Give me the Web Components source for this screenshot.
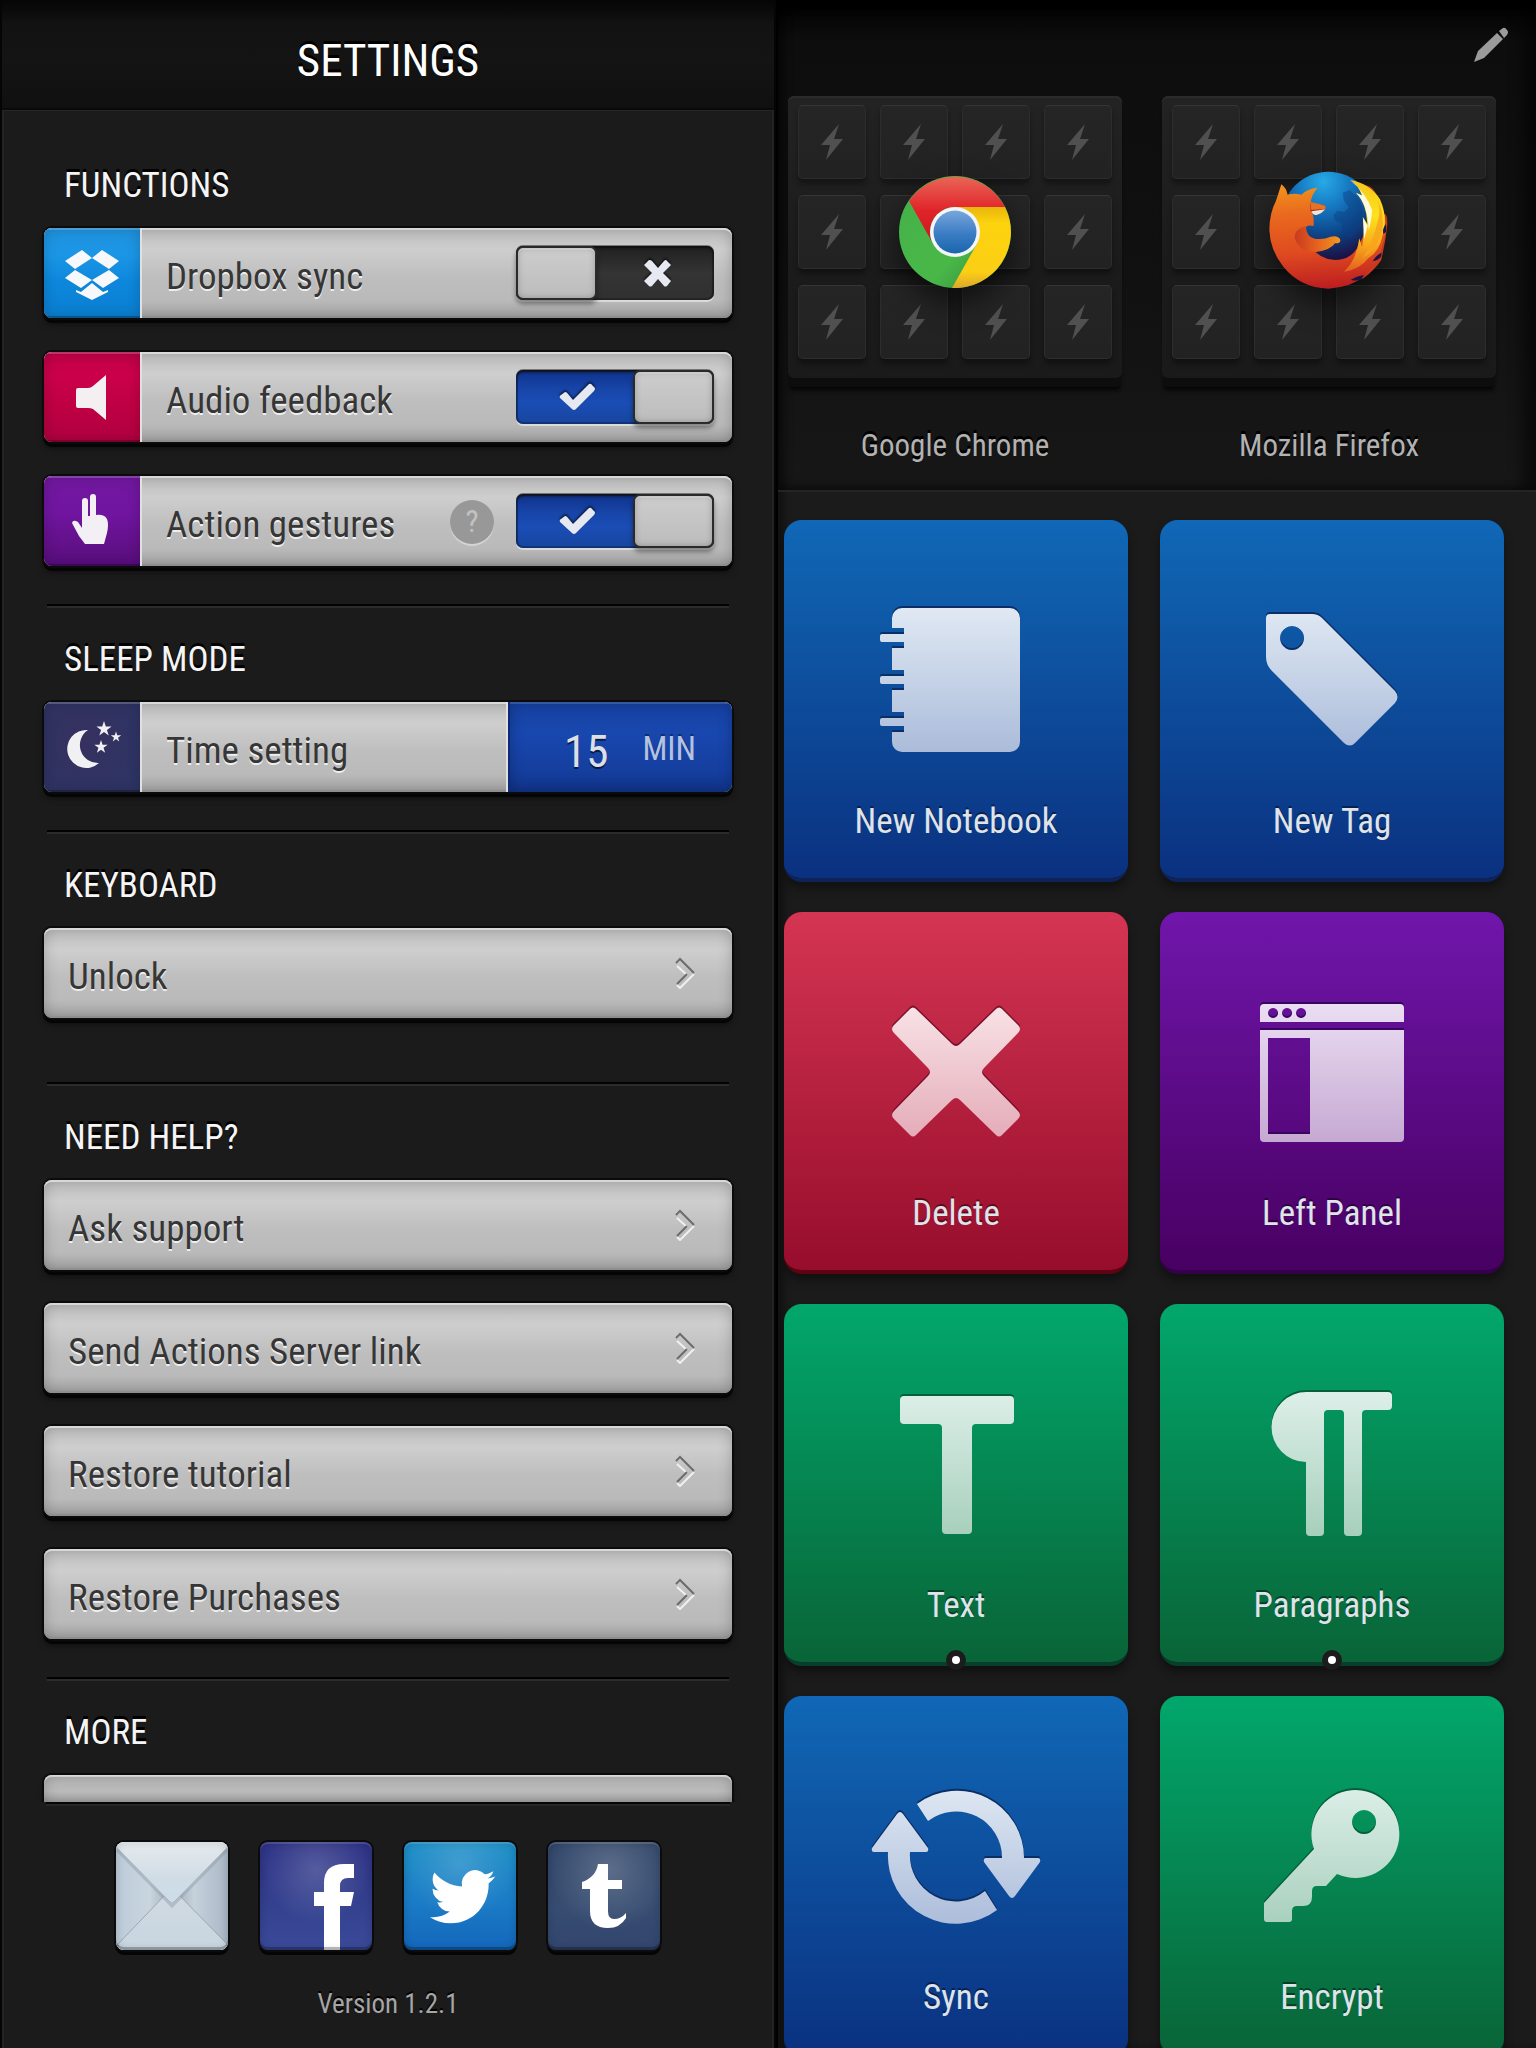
<!DOCTYPE html>
<html lang="en">
<head>
<meta charset="utf-8">
<title>Settings</title>
<style>
  html, body { margin: 0; height: 100%; background: #1b1b1b; }
  body { font-family: "Roboto Condensed", "Roboto", sans-serif; overflow: hidden; }
</style>
</head>
<body>
<app-shell>
  <settings-panel slot="side" heading="SETTINGS" version="Version 1.2.1">
    <settings-section heading="FUNCTIONS">
      <toggle-row label="Dropbox sync" tint="dropbox">
        <svg slot="icon" width="96" height="90" fill="#f6f8fb" aria-hidden="true"><path d="M38 22L21 33l10 8 17-11zM58 22l17 11-10 8-17-11zM31 42l17 10-11 8-16-10zM65 42L48 52l11 8 16-10zM32 62l5 2 11-9 11 9 5-2v2L48 72 32 64z"/></svg>
      </toggle-row>
      <toggle-row label="Audio feedback" tint="audio" on>
        <svg slot="icon" width="96" height="90" fill="#f4f0f2" aria-hidden="true"><path d="M34 36H44Q47 36 49 34L62 23V68L49 57Q47 56 44 56H34q-2 0-2-2V38q0-2 2-2z"/></svg>
      </toggle-row>
      <toggle-row label="Action gestures" tint="gesture" on help>
        <svg slot="icon" width="96" height="90" fill="#f3f0f5" aria-hidden="true"><path d="M38 25a3 3 0 0 1 6 0V40h2V21a3 3 0 0 1 6 0V39Q60 38 63 43Q65 48 63 57L60 68H41L35 60L28 47Q29 43 34 46L38 52z"/></svg>
      </toggle-row>
    </settings-section>
    <settings-section heading="SLEEP MODE">
      <value-row label="Time setting" value="15" unit="MIN">
        <svg slot="icon" width="96" height="90" fill="#f1f1f3" aria-hidden="true">
          <path d="M44 28A19 19 0 1 0 55 61A18 18 0 0 1 44 28z"/>
          <path transform="translate(60 27) scale(8)" d="M0-1 .225-.309.951-.309.363.118.588.809 0 .382-.588.809-.363.118-.951-.309-.225-.309z"/>
          <path transform="translate(72 35) scale(5.5)" d="M0-1 .225-.309.951-.309.363.118.588.809 0 .382-.588.809-.363.118-.951-.309-.225-.309z"/>
          <path transform="translate(57 45) scale(7)" d="M0-1 .225-.309.951-.309.363.118.588.809 0 .382-.588.809-.363.118-.951-.309-.225-.309z"/>
        </svg>
      </value-row>
    </settings-section>
    <settings-section heading="KEYBOARD" roomy>
      <link-row>Unlock</link-row>
    </settings-section>
    <settings-section heading="NEED HELP?" tight>
      <link-row>Ask support</link-row>
      <link-row>Send Actions Server link</link-row>
      <link-row>Restore tutorial</link-row>
      <link-row>Restore Purchases</link-row>
    </settings-section>
    <settings-section heading="MORE" last>
      <link-row plain></link-row>
    </settings-section>

    <social-link slot="social" label="Mail" kind="mail">
      <svg viewBox="0 0 112 108" aria-hidden="true">
        <defs>
          <linearGradient id="mf" x1="0" y1="0" x2="0" y2="1"><stop offset="0" stop-color="#e6ebee"/><stop offset=".6" stop-color="#d0dce5"/><stop offset="1" stop-color="#cbdde9"/></linearGradient>
          <linearGradient id="mb" x1="0" y1="0" x2="0" y2="1"><stop offset="0" stop-color="#d0dae2"/><stop offset="1" stop-color="#c8d5df"/></linearGradient>
          <linearGradient id="ms" x1="0" x2="1"><stop offset="0" stop-color="#bccbd9"/><stop offset=".3" stop-color="#c9d6df"/><stop offset=".5" stop-color="#a3adb5"/><stop offset=".7" stop-color="#c5d2dc"/><stop offset="1" stop-color="#a9b6c5"/></linearGradient>
        </defs>
        <path fill="url(#ms)" d="M0 0H112V108H0z"/>
        <path fill="url(#mb)" stroke="#9ba7b3" stroke-width="1" d="M2 102L50 52H62L111 102V110H2z"/>
        <path fill="none" stroke="#8f9aa6" stroke-width="3" stroke-opacity=".45" d="M1 8L56 64L111 8"/>
        <path fill="url(#mf)" stroke="#a7b1ba" stroke-width="1" d="M-1 -1H113L111 6L58 60Q56 62 54 60L1 6z"/>
      </svg>
    </social-link>
    <social-link slot="social" label="Facebook" kind="facebook">
      <svg viewBox="0 0 112 108" fill="#fff" aria-hidden="true"><path d="M64 108V64H54V50H64V41Q64 22 84 22H94V36H88Q80 36 80 44V50H94L91 64H80V108z"/></svg>
    </social-link>
    <social-link slot="social" label="Twitter" kind="twitter">
      <svg viewBox="0 0 112 108" fill="#fff" aria-hidden="true"><path transform="translate(26 22) scale(2.72)" d="M23.953 4.57a10 10 0 01-2.825.775 4.958 4.958 0 002.163-2.723c-.951.555-2.005.959-3.127 1.184a4.92 4.92 0 00-8.384 4.482C7.69 8.095 4.067 6.13 1.64 3.162a4.822 4.822 0 00-.666 2.475c0 1.71.87 3.213 2.188 4.096a4.904 4.904 0 01-2.228-.616v.06a4.923 4.923 0 003.946 4.827 4.996 4.996 0 01-2.212.085 4.936 4.936 0 004.604 3.417 9.867 9.867 0 01-6.102 2.105c-.39 0-.779-.023-1.17-.067a13.995 13.995 0 007.557 2.209c9.053 0 13.998-7.496 13.998-13.985 0-.21 0-.42-.015-.63A9.935 9.935 0 0024 4.59z"/></svg>
    </social-link>
    <social-link slot="social" label="Tumblr" kind="tumblr">
      <svg viewBox="0 0 112 108" fill="#fff" aria-hidden="true"><path d="M50 22H60V38H74V47H60V69Q60 77 66 77Q73 77 78 71V76Q72 86 60 86Q42 86 42 69V47H34V40Q48 35 50 22z"/></svg>
    </social-link>
  </settings-panel>

  <app-switcher slot="apps">
    <app-card name="Google Chrome">
      <svg width="112" height="112" viewBox="-56 -56 112 112" aria-hidden="true">
        <defs>
          <linearGradient id="cr" x1="0" y1="0" x2="0" y2="1"><stop offset="0" stop-color="#ea6556"/><stop offset=".5" stop-color="#e0242a"/><stop offset="1" stop-color="#c41a1e"/></linearGradient>
          <linearGradient id="cy" x1="0" y1="0" x2="0" y2="1"><stop offset="0" stop-color="#e9b50c"/><stop offset=".2" stop-color="#fcd30e"/><stop offset=".8" stop-color="#fbcf14"/><stop offset="1" stop-color="#dda62c"/></linearGradient>
          <linearGradient id="cg" x1="0" y1="0" x2="1" y2="1"><stop offset="0" stop-color="#43b04a"/><stop offset=".6" stop-color="#4ab848"/><stop offset="1" stop-color="#2e8238"/></linearGradient>
          <linearGradient id="cb" x1="0" y1="0" x2="0" y2="1"><stop offset="0" stop-color="#79a6dc"/><stop offset=".55" stop-color="#3a7cc4"/><stop offset="1" stop-color="#1b66ab"/></linearGradient>
        </defs>
        <circle r="56" fill="url(#cg)"/>
        <path fill="url(#cy)" d="M0-25H50A56 56 0 0 1-3 56L21.6 12.5z"/>
        <path fill="url(#cr)" d="M-46-31A56 56 0 0 1 50-25H0A25 25 0 0 0-21.6 12.5z"/>
        <circle r="25" fill="#f3f5f7"/><circle r="21.5" fill="url(#cb)"/>
      </svg>
    </app-card>
    <app-card name="Mozilla Firefox">
      <svg width="126" height="126" viewBox="138 57 378 378" aria-hidden="true">
        <defs>
          <radialGradient id="fg" gradientUnits="userSpaceOnUse" cx="310" cy="95" r="245"><stop offset="0" stop-color="#27aae6"/><stop offset=".35" stop-color="#1474bd"/><stop offset=".65" stop-color="#0d4487"/><stop offset=".95" stop-color="#1b1246"/></radialGradient>
          <linearGradient id="fo" gradientUnits="userSpaceOnUse" x1="250" y1="110" x2="270" y2="415"><stop offset="0" stop-color="#f0901e"/><stop offset=".25" stop-color="#ea6a1e"/><stop offset=".65" stop-color="#df4a20"/><stop offset="1" stop-color="#bd1f20"/></linearGradient>
          <linearGradient id="fy" gradientUnits="userSpaceOnUse" x1="430" y1="100" x2="410" y2="375"><stop offset="0" stop-color="#f6c91c"/><stop offset=".35" stop-color="#fde21c"/><stop offset=".65" stop-color="#f8ad1d"/><stop offset="1" stop-color="#e2571f"/></linearGradient>
          <linearGradient id="fa" x1="0" y1="0" x2="1" y2="0"><stop offset="0" stop-color="#c93a20"/><stop offset=".5" stop-color="#e5631f"/><stop offset="1" stop-color="#f39a1f"/></linearGradient>
        </defs>
        <circle cx="325" cy="205" r="140" fill="url(#fg)"/>
        <path fill="#0b3f80" opacity=".45" d="M368 128l22-8 14 14 12 8 10 30 2 40-14 30-20 22-22-10-8-34-18-8-6-16 12-14 22 4 12-14-14-20z"/>
        <path fill="#c8391d" d="M435 105Q466 110 474 148L482 185L498 194Q504 205 501 232L496 270Q490 300 484 330Q462 362 430 385L350 412L380 340L455 250L470 170z"/>
        <path fill="url(#fo)" d="M168 152L184 103Q199 114 203 134Q222 128 244 134Q262 116 293 113Q274 134 272 158L281 206V228Q252 222 258 244Q262 270 272 290Q300 328 345 330Q395 330 416 285L440 240L470 200L492 195Q506 235 488 282Q478 336 436 376Q395 412 325 416Q240 412 190 350Q150 300 148 240Q148 190 168 152z"/>
        <path fill="#a92420" d="M270 156L300 163Q318 165 318 176Q312 184 298 188Q288 196 272 184z"/>
        <path fill="#f4e3d5" d="M274 184L316 178Q306 190 292 194Q280 198 274 184z"/>
        <path fill="#e27428" d="M270 155L302 163Q320 166 317 176L274 180z"/>
        <path fill="url(#fa)" d="M257 228Q222 238 224 264Q238 306 288 306Q332 300 345 280Q362 281 361 270Q356 256 332 260Q310 270 284 266Q260 262 257 228z"/>
        <path fill="url(#fy)" d="M390 90Q450 100 480 148Q505 205 488 255Q478 305 445 325Q420 358 372 366Q410 330 418 265L426 292Q436 240 428 200L442 222Q440 160 408 128L426 136Q415 105 390 90z"/>
        <path fill="#fffbe2" d="M392 92Q438 128 456 180Q454 215 446 240Q444 165 409 129L428 138Q418 108 392 92zM429 203L443 228L432 268z"/>
        <path fill="#f7a41d" d="M474 210Q484 180 472 150Q496 195 486 245Q470 300 428 325Q462 270 474 210z" opacity=".8"/>
        <path fill="#1a1446" d="M498 222q-12 14-8 30l8-6zM484 308q-18 10-26 26 20-4 26-16zM432 376q-22 2-40 14 22 4 32-2z"/>
      </svg>
    </app-card>
  </app-switcher>

  <action-grid slot="actions">
    <action-tile label="New Notebook" tone="blue"><g-icon name="notebook"></g-icon></action-tile>
    <action-tile label="New Tag" tone="blue"><g-icon name="tag"></g-icon></action-tile>
    <action-tile label="Delete" tone="red"><g-icon name="cross"></g-icon></action-tile>
    <action-tile label="Left Panel" tone="purple"><g-icon name="panel"></g-icon></action-tile>
    <action-tile label="Text" tone="green" more><g-icon name="text"></g-icon></action-tile>
    <action-tile label="Paragraphs" tone="green" more><g-icon name="pilcrow"></g-icon></action-tile>
    <action-tile label="Sync" tone="blue"><g-icon name="sync"></g-icon></action-tile>
    <action-tile label="Encrypt" tone="green"><g-icon name="key"></g-icon></action-tile>
  </action-grid>
</app-shell>

<script>
const define = (name, render) => customElements.define(name, class extends HTMLElement {
  constructor() { super(); this.attachShadow({ mode: 'open' }); }
  connectedCallback() { this.shadowRoot.innerHTML = render(this); }
});
const attr = (el, name) => el.getAttribute(name) || '';

/* Shared look of the raised grey bars. */
const bar = `
  * { box-sizing: border-box; }
  :host { display: block; }
  .bar {
    display: flex; align-items: stretch; width: 100%; height: 90px; margin: 0; padding: 0; border: 0;
    border-radius: 8px; overflow: hidden; font: inherit; font-size: 37px; line-height: 46px; color: #363636; text-align: left;
    background: linear-gradient(#bcbcbc, #cecece 24%, #bebebe 55%, #bababa 80%, #a4a4a4);
    box-shadow: 0 0 0 2px #0b0b0b, 0 4px 0 1px #050505, 0 6px 6px rgba(0,0,0,.5),
      inset 0 2px 0 #d8d8d8, inset 0 -2px 0 #8e8e8e, inset 0 0 14px rgba(0,0,0,.22);
  }
  .name { flex: 1; align-self: center; padding: 8px 0 0 24px; text-shadow: 0 2px 0 rgba(255,255,255,.75); white-space: nowrap; }
  .icon { flex: none; width: 98px; border-right: 2px solid #e0e0e0; background: var(--tint);
    box-shadow: inset 0 2px 0 rgba(255,255,255,.2), inset 0 -2px 0 rgba(0,0,0,.25), inset 0 0 14px rgba(0,0,0,.2); }
  ::slotted(svg) { display: block; }
`;

define('app-shell', () => `
  <style>
    :host { display: grid; grid-template-columns: 776fr 760fr; height: 100vh; overflow: hidden; }
    .main { display: flex; flex-direction: column; min-height: 0; min-width: 0; overflow: hidden; border-left: 2px solid #000; background: #1b1b1b;
      box-shadow: inset 6px 0 6px rgba(0,0,0,.35); }
  </style>
  <slot name="side"></slot>
  <main class="main"><slot name="apps"></slot><slot name="actions"></slot></main>`);

define('settings-panel', el => `
  <style>
    :host { display: flex; flex-direction: column; min-height: 0; box-sizing: border-box; background: #1b1b1b;
      border: solid #050505; border-width: 0 2px; box-shadow: inset 2px 0 0 #242424, inset -2px 0 0 #242424; }
    header { box-sizing: border-box; height: 110px; padding-top: 14px; display: grid; place-items: center;
      background: linear-gradient(#050505, #121212 24px, #141414 60px, #101010); border-bottom: 2px solid #0a0a0a; box-shadow: 0 1px 0 #262626; }
    h1 { margin: 0; font-size: 45px; line-height: 50px; font-weight: 400; color: #fff; text-shadow: 0 -3px 0 #000; }
    .list { flex: 1; min-height: 0; overflow: hidden; padding: 24px 42px 0; position: relative; }
    .list::after { content: ""; position: absolute; inset: auto 42px 0; height: 26px; background: linear-gradient(rgba(0,0,0,.04), rgba(0,0,0,.08) 60%, rgba(0,0,0,.28)); }
    footer { margin: 0 44px; padding: 38px 0 24px; border-top: 2px solid #050505; box-shadow: inset 0 2px 0 #262626; text-align: center; }
    nav { display: flex; justify-content: center; gap: 32px; }
    p { margin: 34px 0 0; font-size: 27px; line-height: 40px; color: #a6a6a6; text-shadow: 0 -2px 0 #000; }
  </style>
  <header><h1>${attr(el, 'heading')}</h1></header>
  <div class="list"><slot></slot></div>
  <footer><nav aria-label="Social"><slot name="social"></slot></nav><p>${attr(el, 'version')}</p></footer>`);

define('settings-section', el => `
  <style>
    :host { display: block; padding-top: 32px; }
    h2 { margin: 0 0 22px; padding-left: 20px; font-size: 35px; line-height: 40px; font-weight: 400; color: #f5f5f5; text-shadow: 0 -3px 0 #000; }
    .rows { display: flex; flex-direction: column; gap: 34px; padding-bottom: 38px; }
    hr { margin: 0 3px; height: 2px; border: 0; background: #020202; border-bottom: 2px solid #2b2b2b; }
    :host([tight]) .rows { gap: 33px; }
    :host([roomy]) .rows { padding-bottom: 64px; }
    :host([last]) hr { display: none; }
  </style>
  <h2>${attr(el, 'heading')}</h2><div class="rows"><slot></slot></div><hr>`);

const tints = {
  dropbox: 'linear-gradient(#2092dd, #1b96e6 30%, #0d87dc 60%, #0a7ed0)',
  audio: 'linear-gradient(#bf0047, #cb004b 25%, #bd0042 65%, #b00040)',
  gesture: 'linear-gradient(#71189f, #7015a0 40%, #611087 80%, #550d7c)'
};
define('toggle-row', el => `
  <style>${bar}
    :host { --tint: ${tints[attr(el, 'tint')]}; }
    .help { flex: none; align-self: center; width: 44px; height: 44px; margin: 2px 22px 0 0; padding: 0; border: 0; border-radius: 50%;
      background: #989898; color: #c2c2c2; font: inherit; font-size: 31px; line-height: 44px; box-shadow: 0 2px 0 #d4d4d4; }
    .switch { flex: none; align-self: center; display: grid; width: 198px; height: 54px; margin-right: 18px; }
    .switch > * { grid-area: 1 / 1; }
    input { appearance: none; display: flex; width: 198px; height: 54px; margin: 0; border-radius: 7px;
      background: linear-gradient(#202020, #343434 50%, #303030); box-shadow: 0 2px 0 #dadada, 0 -1px 0 #777, inset 0 2px 3px #111, inset 0 0 0 2px rgba(0,0,0,.25); }
    input::before { content: ""; box-sizing: border-box; width: 81px; height: 54px; border-radius: 7px; border: 2px solid #2a2a2a;
      background: linear-gradient(#cdcdcd, #bcbcbc); box-shadow: inset 0 0 6px rgba(0,0,0,.22), inset 0 2px 0 #dedede, 0 4px 5px rgba(0,0,0,.4); }
    input:checked { justify-content: flex-end; background: linear-gradient(#0f318c, #1745a8 35%, #1a4db5 60%, #17459f); }
    svg { pointer-events: none; filter: drop-shadow(0 -2px 1px rgba(0,0,0,.6)); }
  </style>
  <div class="bar">
    <span class="icon"><slot name="icon"></slot></span>
    <label class="name" for="sw">${attr(el, 'label')}</label>
    ${el.hasAttribute('help') ? '<button class="help" type="button">?</button>' : ''}
    <span class="switch"><input id="sw" type="checkbox" ${el.hasAttribute('on') ? 'checked' : ''}>
      <svg width="198" height="54" fill="#e6e9f2" aria-hidden="true">${el.hasAttribute('on')
        ? '<path d="M44 28Q43 26 45 25L49 22Q51 22 52 24L57 30L73 14Q75 13 76 15L79 18Q79 20 78 21L60 39Q58 41 56 39z"/>'
        : '<path d="M128 19L133 14Q135 14 136 15L142 22L148 15Q150 13 151 15L155 19L147 27L155 35L151 40Q149 41 148 40L142 33L136 40Q134 41 133 40L128 35L136 27z"/>'}</svg>
    </span>
  </div>`);

define('value-row', el => `
  <style>${bar}
    :host { --tint: radial-gradient(circle at 40% 45%, #36305f, #2c3565); }
    .value { flex: none; width: 224px; padding: 4px 36px 0 54px; border: 0; border-left: 2px solid #0c2a78; display: flex; align-items: center; justify-content: space-between;
      font: inherit; color: #dcdfe6; background: linear-gradient(#1641a2, #1847ae 35%, #153fa0 75%, #11348a);
      box-shadow: -2px 0 0 #e0e0e0, inset 0 2px 0 rgba(255,255,255,.15), inset 0 0 14px rgba(0,0,0,.25); }
    b { font-weight: 400; font-size: 45px; line-height: 50px; padding-top: 6px; text-shadow: 0 2px 0 rgba(0,0,0,.6); }
    small { font-size: 33px; line-height: 50px; color: #b4c2e2; text-shadow: 0 -2px 0 rgba(0,0,0,.35); }
  </style>
  <div class="bar">
    <span class="icon"><slot name="icon"></slot></span>
    <label class="name" for="v">${attr(el, 'label')}</label>
    <button class="value" id="v" type="button"><b>${attr(el, 'value')}</b><small>${attr(el, 'unit')}</small></button>
  </div>`);

define('link-row', el => `
  <style>${bar}
    svg { flex: none; align-self: center; margin-right: 36px; }
  </style>
  <button class="bar" type="button"><span class="name"><slot></slot></span>${el.hasAttribute('plain') ? '' : `
    <svg width="22" height="32" fill="none" aria-hidden="true"><path stroke="#f0f0f0" stroke-width="2" d="M3 5L5 3M3 28L6 31L20 17M3 9L13 18"/><path stroke="#6c6c6c" stroke-width="2" d="M2 6L6 2L20 16M3 27L13 17"/></svg>`}
  </button>`);

const social = {
  mail: '#ccd8e1',
  facebook: 'radial-gradient(circle at 50% 25%, rgba(255,255,255,.18), transparent 55%), linear-gradient(#2e3285, #34418f 60%, #3a4a99)',
  twitter: 'radial-gradient(circle at 50% 20%, rgba(255,255,255,.16), transparent 55%), linear-gradient(#1d8fc6, #1a7cc6 55%, #1466bb)',
  tumblr: 'radial-gradient(circle at 55% 25%, rgba(255,255,255,.2), transparent 60%), linear-gradient(#314669, #364c70 60%, #33466f)'
};
define('social-link', el => `
  <style>
    :host { display: block; }
    a { display: block; width: 112px; height: 108px; border-radius: 8px; overflow: hidden; position: relative; background: ${social[attr(el, 'kind')]};
      box-shadow: 0 0 0 2px #0b0b0b, 0 4px 0 1px #050505; }
    a::after { content: ""; position: absolute; inset: 0; border-radius: 8px; box-shadow: inset 0 2px 0 rgba(255,255,255,.14), inset 0 -3px 0 rgba(0,0,0,.25), inset 0 0 8px rgba(0,0,0,.18); }
    ::slotted(svg) { display: block; width: 112px; height: 108px; }
  </style>
  <a href="#${attr(el, 'kind')}" aria-label="${attr(el, 'label')}"><slot></slot></a>`);

define('app-switcher', () => `
  <style>
    :host { display: block; flex: none; box-sizing: border-box; padding: 24px 40px 24px 10px; background: linear-gradient(#000, #0d0d0d 40px, #101010 50%, #171717);
      border-bottom: 2px solid #242424; box-shadow: inset -14px 0 14px rgba(0,0,0,.5), inset 6px 0 8px rgba(0,0,0,.5); }
    .tools { display: flex; justify-content: flex-end; margin-right: -16px; height: 72px; }
    button { width: 40px; height: 40px; padding: 0; border: 0; background: none; }
    svg { display: block; }
    .cards { display: grid; grid-template-columns: 1fr 1fr; gap: 40px; }
  </style>
  <div class="tools"><button type="button" aria-label="Edit"><svg width="40" height="40" fill="#9b9b9b" aria-hidden="true"><path d="M2 38L6 27L25 9L31 15L12 34zM27 7L31 4Q33 3 35 6Q37 8 35 11L32 14z"/></svg></button></div>
  <div class="cards"><slot></slot></div>`);

define('app-card', el => `
  <style>
    :host { display: block; }
    button { display: block; width: 100%; padding: 0; border: 0; background: none; font: inherit; }
    .board { display: grid; padding: 9px 10px 19px; border-radius: 6px; background: linear-gradient(#232323, #1b1b1b 60%, #1a1a1a);
      box-shadow: inset 0 2px 0 #2b2b2b, 0 10px 0 -1px #0d0d0d, 0 14px 4px -2px #040404; }
    .board > * { grid-area: 1 / 1; }
    .cells { display: grid; grid-template-columns: repeat(4, 1fr); gap: 16px 14px; }
    .cells span { height: 74px; box-sizing: border-box; display: grid; place-items: center; border: 1px solid #2d2d2d; border-top-color: #363636; border-radius: 5px;
      background: linear-gradient(#252525, #222); box-shadow: 0 5px 5px rgba(0,0,0,.35); }
    .logo { display: grid; place-items: center; filter: drop-shadow(0 14px 14px rgba(0,0,0,.55)); }
    .label { display: block; margin-top: 48px; font-size: 31px; line-height: 40px; text-align: center; color: #b2b2b2; text-shadow: 0 -3px 0 #000; }
    ::slotted(svg) { display: block; }
  </style>
  <button type="button">
    <span class="board">
      <span class="cells">${'<span><svg width="24" height="38" fill="#505050" aria-hidden="true"><path d="M19 1L1 22H10L6 37L23 16H14z"/></svg></span>'.repeat(12)}</span>
      <span class="logo"><slot></slot></span>
    </span>
    <span class="label">${attr(el, 'name')}</span>
  </button>`);

define('action-grid', () => `
  <style>
    :host { display: grid; flex: none; grid-template-columns: 1fr 1fr; gap: 30px 32px; padding: 28px 32px 30px 6px; }
  </style><slot></slot>`);

const tones = {
  blue: ['#1068b6', '#0a3180', '#0e2358', '#dfe8f3', '#abbcda', '#0a2f66'],
  red: ['#d43552', '#970d2c', '#5e0311', '#f9e4e8', '#e3a9b6', '#7a0f28'],
  purple: ['#7016ab', '#480062', '#34014c', '#ebdff3', '#c5a8d2', '#3a0560'],
  green: ['#02a76c', '#096437', '#073f2c', '#dcefe8', '#a7cfbc', '#04603c']
};
define('action-tile', el => {
  const t = tones[attr(el, 'tone')];
  return `
  <style>
    :host { display: block; position: relative; --hi: ${t[3]}; --lo: ${t[4]}; --edge: ${t[5]}; }
    button { display: flex; flex-direction: column; align-items: center; gap: 42px; box-sizing: border-box; width: 100%; margin: 0; padding: 80px 0 36px; border: 0; border-bottom: 4px solid ${t[2]}; border-radius: 18px;
      font: inherit; font-size: 35px; line-height: 40px; color: #dfe3ea; text-shadow: 0 -2px 0 rgba(0,0,0,.45);
      background: linear-gradient(${t[0]}, ${t[1]}) padding-box ${t[2]}; box-shadow: 0 6px 10px rgba(0,0,0,.4); }
    i { position: absolute; left: calc(50% - 10px); bottom: -4px; box-sizing: border-box; width: 20px; height: 20px; border: 6px solid #1c1c1c; border-radius: 50%; background: #fff; }
  </style>
  <button type="button"><slot></slot><span>${attr(el, 'label')}</span></button>${el.hasAttribute('more') ? '<i></i>' : ''}`;
});

const icons = {
  notebook: '<path d="M34 8H142a10 10 0 0 1 10 10V142a10 10 0 0 1-10 10H34a10 10 0 0 1-10-10V132h12v-6H14q-2 0-2-2v-4q0-2 2-2h22v-6H24V90h12v-6H14q-2 0-2-2v-4q0-2 2-2h22v-6H24V48h12v-6H14q-2 0-2-2v-4q0-2 2-2h22v-6H24V18a10 10 0 0 1 10-10z"/>',
  tag: '<path fill-rule="evenodd" d="M26 14H68q6 0 10 4L151 91q5 6 0 12L111 143q-5 5-11 0L28 71q-6-6-6-14V18q0-4 4-4zM48 26a12 12 0 1 0 .1 0z"/>',
  cross: '<path d="M42 17q3-3 6 0L84 52q4 4 8 0L128 17q3-3 6 0L150 33q4 4 0 8L116 76q-4 4 0 8L150 119q4 4 0 8L134 143q-3 3-6 0L92 108q-4-4-8 0L48 143q-3 3-6 0L26 127q-4-4 0-8L60 84q4-4 0-8L26 41q-4-4 0-8z"/>',
  panel: '<path fill-rule="evenodd" d="M20 12H156q4 0 4 4V30H16V16q0-4 4-4zM29 16a5 5 0 1 0 .1 0zM43 16a5 5 0 1 0 .1 0zM57 16a5 5 0 1 0 .1 0zM16 38H160V146q0 4-4 4H20q-4 0-4-4zM24 46V142H66V46z"/>',
  text: '<path d="M36 12H142q4 0 4 4V36q0 4-4 4H108q-4 0-4 4V146q0 4-4 4H78q-4 0-4-4V44q0-4-4-4H36q-4 0-4-4V16q0-4 4-4z"/>',
  pilcrow: '<path d="M63 8H144q4 0 4 4V22q0 4-4 4H122q-4 0-4 4V148q0 4-4 4H104q-4 0-4-4V30q0-4-4-4H84q-4 0-4 4V148q0 4-4 4H66q-4 0-4-4V78A35 35 0 0 1 63 8z"/>',
  sync: '<path d="M49 28A67 67 0 0 1 156 82H170q3 0 2 4L147 120q-3 4-6 0L116 86q-1-4 2-4H134A46 46 0 0 0 60 45zM129 134A68 68 0 0 1 20 76H6q-3 0-2-4L29 38q3-4 6 0L60 72q1 4-2 4H42A46 46 0 0 0 117 115z"/>',
  key: '<path fill-rule="evenodd" d="M70 73A44 44 0 1 1 93 98L82 110H73q-5 0-5 5v6q0 9-9 9h-6q-5 0-5 5V143q0 3-3 3H23q-3 0-3-3V127zM120 34a12 12 0 1 0 .1 0z"/>'
};
define('g-icon', el => `
  <style>
    :host { display: block; }
    svg { display: block; fill: url(#f); filter: drop-shadow(0 -2px 0 var(--edge)); }
    .hi { stop-color: var(--hi); } .lo { stop-color: var(--lo); }
  </style>
  <svg width="176" height="160" aria-hidden="true">
    <defs><linearGradient id="f" gradientUnits="userSpaceOnUse" x1="0" y1="10" x2="0" y2="152"><stop class="hi" offset="0"/><stop class="lo" offset="1"/></linearGradient></defs>
    ${icons[attr(el, 'name')]}
  </svg>`);
</script>
</body>
</html>
